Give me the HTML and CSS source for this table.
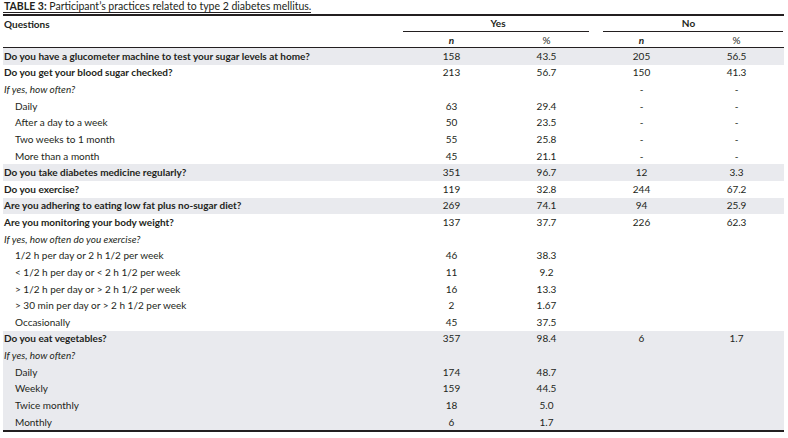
FILE: index.html
```html
<!DOCTYPE html>
<html lang="en">
<head>
<meta charset="utf-8">
<title>Table 3</title>
<link rel="stylesheet" href="styles.css">
</head>
<body>
<div class="page">
  <div class="caption"><span class="caption-text"><span class="caption-label">TABLE 3:</span> Participant’s practices related to type 2 diabetes mellitus.</span></div>
  <table class="data">
    <colgroup>
      <col class="c-q">
      <col class="c-n">
      <col class="c-n">
      <col class="c-n">
      <col class="c-n">
    </colgroup>
    <thead>
      <tr class="h1">
        <th class="q">Questions</th>
        <th colspan="2" class="grp"><div class="grp-yes">Yes</div></th>
        <th colspan="2" class="grp"><div class="grp-no">No</div></th>
      </tr>
      <tr class="h2">
        <th class="q"></th>
        <th class="sub"><i class="n">n</i></th>
        <th class="sub">%</th>
        <th class="sub"><i class="n">n</i></th>
        <th class="sub">%</th>
      </tr>
    </thead>
    <tbody>
      <tr class="shade"><td class="q b">Do you have a glucometer machine to test your sugar levels at home?</td><td>158</td><td>43.5</td><td>205</td><td>56.5</td></tr>
      <tr><td class="q b">Do you get your blood sugar checked?</td><td>213</td><td>56.7</td><td>150</td><td>41.3</td></tr>
      <tr><td class="q it">If yes, how often?</td><td></td><td></td><td>-</td><td>-</td></tr>
      <tr><td class="q ind">Daily</td><td>63</td><td>29.4</td><td>-</td><td>-</td></tr>
      <tr><td class="q ind">After a day to a week</td><td>50</td><td>23.5</td><td>-</td><td>-</td></tr>
      <tr><td class="q ind">Two weeks to 1 month</td><td>55</td><td>25.8</td><td>-</td><td>-</td></tr>
      <tr><td class="q ind">More than a month</td><td>45</td><td>21.1</td><td>-</td><td>-</td></tr>
      <tr class="shade"><td class="q b">Do you take diabetes medicine regularly?</td><td>351</td><td>96.7</td><td>12</td><td>3.3</td></tr>
      <tr><td class="q b">Do you exercise?</td><td>119</td><td>32.8</td><td>244</td><td>67.2</td></tr>
      <tr class="shade"><td class="q b">Are you adhering to eating low fat plus no-sugar diet?</td><td>269</td><td>74.1</td><td>94</td><td>25.9</td></tr>
      <tr><td class="q b">Are you monitoring your body weight?</td><td>137</td><td>37.7</td><td>226</td><td>62.3</td></tr>
      <tr><td class="q it">If yes, how often do you exercise?</td><td></td><td></td><td></td><td></td></tr>
      <tr><td class="q ind">1/2 h per day or 2 h 1/2 per week</td><td>46</td><td>38.3</td><td></td><td></td></tr>
      <tr><td class="q ind">&lt; 1/2 h per day or &lt; 2 h 1/2 per week</td><td>11</td><td>9.2</td><td></td><td></td></tr>
      <tr><td class="q ind">&gt; 1/2 h per day or &gt; 2 h 1/2 per week</td><td>16</td><td>13.3</td><td></td><td></td></tr>
      <tr><td class="q ind">&gt; 30 min per day or &gt; 2 h 1/2 per week</td><td>2</td><td>1.67</td><td></td><td></td></tr>
      <tr><td class="q ind">Occasionally</td><td>45</td><td>37.5</td><td></td><td></td></tr>
      <tr class="shade"><td class="q b">Do you eat vegetables?</td><td>357</td><td>98.4</td><td>6</td><td>1.7</td></tr>
      <tr class="shade"><td class="q it">If yes, how often?</td><td></td><td></td><td></td><td></td></tr>
      <tr class="shade"><td class="q ind">Daily</td><td>174</td><td>48.7</td><td></td><td></td></tr>
      <tr class="shade"><td class="q ind">Weekly</td><td>159</td><td>44.5</td><td></td><td></td></tr>
      <tr class="shade"><td class="q ind">Twice monthly</td><td>18</td><td>5.0</td><td></td><td></td></tr>
      <tr class="shade last"><td class="q ind">Monthly</td><td>6</td><td>1.7</td><td></td><td></td></tr>
    </tbody>
  </table>
</div>
</body>
</html>
```
FILE: styles.css
```css
html, body {
  margin: 0;
  padding: 0;
  background: #ffffff;
}
body {
  font-family: "Lato", "Open Sans", sans-serif;
  font-size: 10px;
  color: #231f20;
}
.page {
  padding: 0 4px 0 3px;
}
.caption {
  height: 14px;
  font-size: 10.5px;
}
.caption-text {
  display: inline-block;
  border-bottom: 1px solid #231f20;
  line-height: 12px;
  height: 12px;
  padding-left: 1px;
}
.caption-label {
  font-weight: 700;
}
.data {
  border-collapse: collapse;
  table-layout: fixed;
  width: 781px;
  border-top: 2px solid #231f20;
  border-bottom: 2px solid #231f20;
}
.c-q { width: 401px; }
.c-n { width: 95px; }
.data th, .data td {
  padding: 0;
  text-align: center;
  vertical-align: middle;
  white-space: nowrap;
  font-weight: 400;
}
.data th { font-weight: 700; }
.data .q {
  text-align: left;
  padding-left: 1px;
}
.h1 th { height: 16px; }
.h2 th {
  height: 15px;
  border-bottom: 1px solid #231f20;
}
.h2 .sub { font-weight: 400; }
.h2 .n { font-weight: 700; }
.grp-yes {
  border-bottom: 1px solid #231f20;
  margin-left: -1px;
  margin-right: 5px;
  line-height: 15px;
  padding-left: 4px;
}
.grp-no {
  border-bottom: 1px solid #231f20;
  margin-left: 9px;
  margin-right: 1px;
  line-height: 15px;
  padding-right: 9px;
}
.data tbody td { height: 16.63px; line-height: 13px; }
.shade td { background: #e9eaee; }
.b { font-weight: 700 !important; }
.it { font-style: italic; }
.ind { padding-left: 12px !important; }
```
